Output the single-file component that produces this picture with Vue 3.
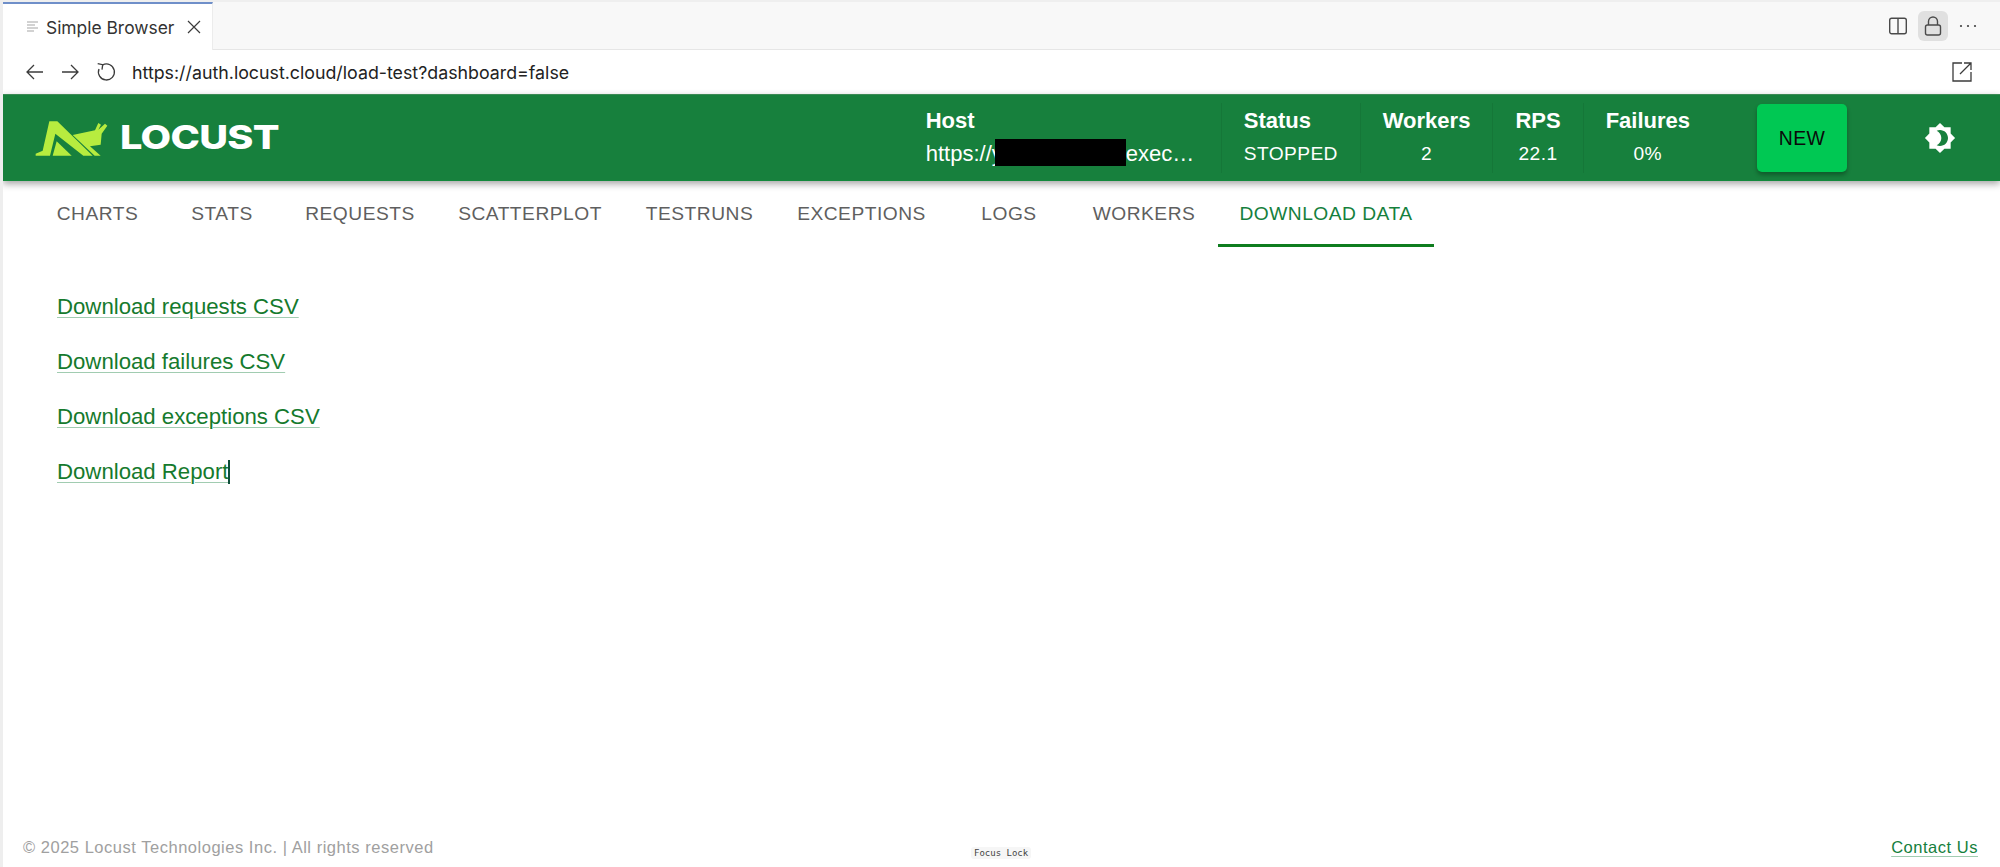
<script setup>
const tabs = [
  { label: 'CHARTS', w: 125 },
  { label: 'STATS', w: 124 },
  { label: 'REQUESTS', w: 152 },
  { label: 'SCATTERPLOT', w: 188 },
  { label: 'TESTRUNS', w: 151 },
  { label: 'EXCEPTIONS', w: 173 },
  { label: 'LOGS', w: 122 },
  { label: 'WORKERS', w: 148 },
  { label: 'DOWNLOAD DATA', w: 216, active: true }
]
const links = ['Download requests CSV', 'Download failures CSV', 'Download exceptions CSV', 'Download Report']
const stats = [
  { label: 'Workers', value: '2' },
  { label: 'RPS', value: '22.1' },
  { label: 'Failures', value: '0%' }
]
</script>

<template>
  <div class="shell">
    <div class="tabbar">
      <div class="tab">
        <svg class="tab-icon" width="14" height="14" viewBox="0 0 14 14"><path d="M1 2h11M1 5h8M1 8h11M1 11h7" stroke="#c4c4c4" stroke-width="1.3" fill="none"/></svg>
        <span class="tab-title">Simple Browser</span>
        <svg class="tab-close" width="16" height="16" viewBox="0 0 16 16"><path d="M2 2l12 12M14 2L2 14" stroke="#3b3b3b" stroke-width="1.2" fill="none"/></svg>
      </div>
      <div class="tab-actions">
        <svg width="20" height="20" viewBox="0 0 20 20" fill="none" stroke="#4a4a4a" stroke-width="1.4"><rect x="1.7" y="2.2" width="16.6" height="15.6" rx="2"/><path d="M10 2.2v15.6"/></svg>
        <div class="lock-btn">
          <svg width="20" height="22" viewBox="0 0 20 22" fill="none" stroke="#4a4a4a" stroke-width="1.4"><rect x="2.5" y="10" width="15" height="10" rx="2"/><path d="M5.5 10V6.5a4.5 4.5 0 0 1 9 0V10"/></svg>
        </div>
        <svg width="18" height="4" viewBox="0 0 18 4" fill="#424242"><circle cx="2" cy="2" r="1.1"/><circle cx="9" cy="2" r="1.1"/><circle cx="16" cy="2" r="1.1"/></svg>
      </div>
    </div>

    <div class="addressbar">
      <svg width="20" height="18" viewBox="0 0 20 18" fill="none" stroke="#3b3b3b" stroke-width="1.3"><path d="M18 9H2M9 2L2 9l7 7"/></svg>
      <svg class="fwd" width="20" height="18" viewBox="0 0 20 18" fill="none" stroke="#3b3b3b" stroke-width="1.3"><path d="M2 9h16M11 2l7 7-7 7"/></svg>
      <svg class="reload" width="20" height="20" viewBox="0 0 20 20" fill="none" stroke="#3b3b3b" stroke-width="1.3"><path d="M6.7 2.9A8 8 0 1 1 3 7"/><path d="M1.7 1.7L6.7 2.7L6 7.7"/></svg>
      <span class="url">https://auth.locust.cloud/load-test?dashboard=false</span>
      <svg class="open" width="20" height="20" viewBox="0 0 20 20" fill="none" stroke="#3b3b3b" stroke-width="1.3"><path d="M10 1H1v18h18v-9"/><path d="M8 12L19 1M12 1h7v7"/></svg>
    </div>

    <header class="appbar">
      <div class="logo">
        <svg width="85" height="50" viewBox="0 0 255 150">
          <path fill="#b7ec3f" d="M58 25 L82 25 L188 128 L160 128 L76 62 L60 128 L17 128 L17 122 L38 113 Z"/>
          <path fill="#b7ec3f" d="M80 85 L125 128 L68 128 Z"/>
          <path fill="#b7ec3f" d="M128 66 L195 52 L205 30 L213 35 L205 50 L225 32 L232 38 L215 62 L212 95 L180 100 L212 128 L194 128 Z"/>
        </svg>
        <span class="wordmark">LOCUST</span>
      </div>

      <div class="stats">
        <div class="stat host">
          <div class="stat-label">Host</div>
          <div class="stat-value host-value">https://y<span class="redact"></span>exec…</div>
        </div>
        <div class="stat status">
          <div class="stat-label">Status</div>
          <div class="stat-value">STOPPED</div>
        </div>
        <div v-for="s in stats" :key="s.label" class="stat centered">
          <div class="stat-label">{{ s.label }}</div>
          <div class="stat-value">{{ s.value }}</div>
        </div>
      </div>

      <button class="new-btn">NEW</button>

      <svg class="theme" width="32" height="32" viewBox="0 0 24 24"><path fill="#fff" d="M20 8.69V4h-4.69L12 .69 8.69 4H4v4.69L.69 12 4 15.31V20h4.69L12 23.31 15.31 20H20v-4.69L23.31 12 20 8.69zM12 18c-.89 0-1.74-.2-2.5-.55C11.56 16.5 13 14.42 13 12s-1.44-4.5-3.5-5.45C10.26 6.2 11.11 6 12 6c3.31 0 6 2.69 6 6s-2.69 6-6 6z"/></svg>
    </header>

    <nav class="tabs">
      <a v-for="t in tabs" :key="t.label" class="nav-tab" :class="{ active: t.active }" :style="{ width: t.w + 'px' }">{{ t.label }}</a>
    </nav>

    <main class="links">
      <a v-for="(l, i) in links" :key="l" class="dl-link">{{ l }}<span v-if="i === 3" class="caret"></span></a>
    </main>

    <footer class="footer">
      <span class="copy">© 2025 Locust Technologies Inc. | All rights reserved</span>
      <a class="contact">Contact Us</a>
    </footer>

    <div class="focus-lock">Focus Lock</div>
  </div>
</template>

<style>
html, body { margin: 0; background: #fff; }
</style>

<style scoped>
.shell {
  position: relative;
  height: 867px;
  box-sizing: border-box;
  border-left: 3px solid #eeeeee;
  display: flex;
  flex-direction: column;
  overflow: hidden;
  font-family: "Liberation Sans", Arial, sans-serif;
  background: #fff;
}
.tabbar {
  height: 50px;
  box-sizing: border-box;
  display: flex;
  align-items: stretch;
  justify-content: space-between;
  background: #f8f8f8;
  border-top: 2px solid #efefef;
  border-bottom: 1px solid #e6e6e6;
}
.tab {
  width: 210px;
  height: 48px;
  box-sizing: border-box;
  background: #fff;
  border-top: 2px solid #6f8fc9;
  border-right: 1px solid #ececec;
  display: flex;
  align-items: center;
  padding-left: 23px;
  font-family: Inter, sans-serif;
  color: #333;
}
.tab-title { font-size: 17.4px; margin-left: 6px; white-space: nowrap; }
.tab-close { margin-left: 12px; }
.tab-actions { display: flex; align-items: center; padding-right: 23px; }
.lock-btn {
  width: 30px;
  height: 30px;
  margin: 0 11px 0 10px;
  background: #e0e0e0;
  border-radius: 6px;
  display: flex;
  align-items: center;
  justify-content: center;
}
.addressbar {
  height: 44px;
  display: flex;
  align-items: center;
  padding-left: 22px;
  padding-right: 28px;
  background: #fff;
}
.fwd { margin-left: 15px; }
.reload { margin-left: 16px; }
.url {
  margin-left: 16px;
  font-family: Inter, sans-serif;
  font-size: 17.8px;
  color: #222;
}
.open { margin-left: auto; }
.appbar {
  height: 87px;
  box-sizing: border-box;
  background: #17803d;
  border-top: 1px solid #3c8a55;
  border-bottom: 1px solid #12893c;
  box-shadow: 0 3px 7px rgba(0, 0, 0, .35);
  display: flex;
  align-items: center;
  color: #fff;
  position: relative;
  z-index: 2;
}
.logo { display: flex; align-items: center; margin-left: 27px; }
.wordmark {
  margin-left: 5px;
  font-family: Inter, sans-serif;
  font-weight: 800;
  font-size: 33px;
  letter-spacing: -0.6px;
  line-height: 1;
  transform: scaleX(1.2);
  transform-origin: left center;
}
.stats { display: flex; margin-left: auto; height: 70px; align-items: stretch; }
.stat {
  box-sizing: border-box;
  padding: 0 22px;
  border-left: 1px solid rgba(0, 0, 0, .07);
  display: flex;
  flex-direction: column;
  justify-content: center;
  gap: 7px;
}
.stat:first-child { border-left: 0; }
.centered { align-items: center; }
.host { width: 317px; }
.status { width: 139px; }
.stat-label { font-size: 22px; font-weight: 700; line-height: 26px; white-space: nowrap; }
.stat-value { font-size: 19.2px; line-height: 26px; letter-spacing: .4px; white-space: nowrap; }
.host-value { font-size: 22px; display: flex; align-items: center; letter-spacing: 0; }
.redact { display: inline-block; width: 131px; height: 27px; background: #000; margin-left: -8px; transform: translateY(-2px); }
.new-btn {
  width: 90px;
  height: 68px;
  margin-left: 45px;
  border: 0;
  border-radius: 5px;
  background: #00c853;
  color: #0a0a0a;
  font-family: "Liberation Sans", Arial, sans-serif;
  font-size: 19.4px;
  letter-spacing: .4px;
  padding-top: 2px;
  box-shadow: 0 3px 4px rgba(0, 0, 0, .3);
}
.theme { margin-left: 77px; margin-right: 44px; }
.tabs { display: flex; height: 66px; padding-left: 32px; box-sizing: border-box; }
.nav-tab {
  box-sizing: border-box;
  height: 66px;
  display: flex;
  align-items: center;
  justify-content: center;
  font-size: 19.2px;
  letter-spacing: .5px;
  color: #5f5f5f;
  white-space: nowrap;
}
.nav-tab.active { color: #15803d; border-bottom: 3px solid #0f7d1f; padding-top: 3px; }
.links {
  display: flex;
  flex-direction: column;
  align-items: flex-start;
  gap: 30px;
  padding: 47px 0 0 54px;
}
.dl-link {
  font-size: 22.2px;
  line-height: 25px;
  color: #157a2d;
  text-decoration: underline;
  text-decoration-color: rgba(21, 128, 61, .4);
  text-decoration-thickness: 1px;
  text-underline-offset: 3px;
  position: relative;
}
.caret {
  display: inline-block;
  width: 2px;
  height: 24px;
  background: #0f4f3a;
  vertical-align: -5px;
}
.footer {
  margin-top: auto;
  height: 44px;
  display: flex;
  align-items: center;
  justify-content: space-between;
  padding: 4px 22px 0 20px;
  box-sizing: border-box;
  font-size: 16.5px;
  letter-spacing: .52px;
}
.copy { color: #a0a0a0; }
.contact {
  color: #15803d;
  text-decoration: underline;
  text-decoration-color: rgba(21, 128, 61, .4);
  text-underline-offset: 3px;
}
.focus-lock {
  position: absolute;
  bottom: 8px;
  left: 968px;
  padding: 1px 3px;
  font-family: "DejaVu Sans Mono", monospace;
  font-size: 9px;
  color: #444;
  background: #f6f6f6;
  border-radius: 3px;
}
</style>
